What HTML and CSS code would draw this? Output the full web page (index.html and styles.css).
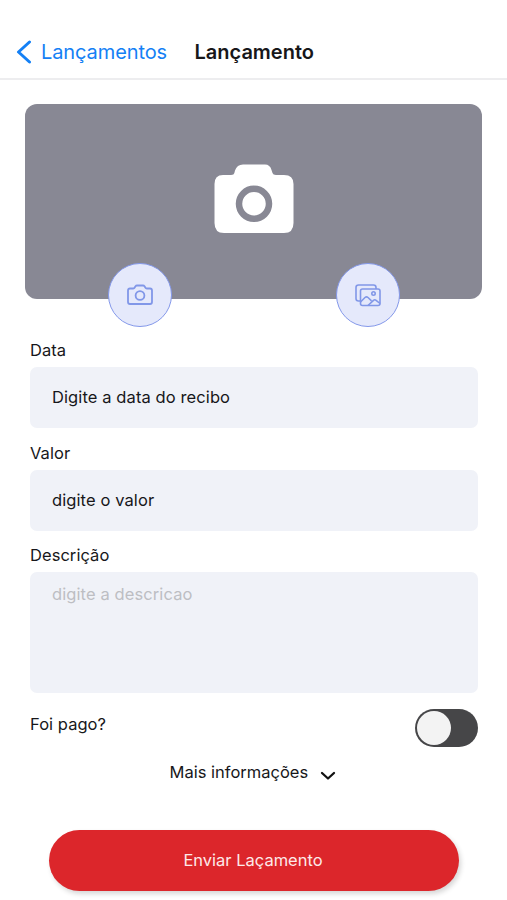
FILE: index.html
```html
<!DOCTYPE html>
<html lang="pt-BR">
<head>
<meta charset="utf-8">
<meta name="viewport" content="width=device-width, initial-scale=1">
<title>Lançamento</title>
<link rel="stylesheet" href="styles.css">
</head>
<body>
<header class="nav">
  <a class="back" href="#">
    <svg class="back-icon" width="16" height="24" viewBox="0 0 16 24" fill="none" stroke="currentColor" stroke-width="3" stroke-linecap="round" stroke-linejoin="round"><path d="M13.500 2 2.500 12l11 10"/></svg>
    <span>Lançamentos</span>
  </a>
  <h1 class="title">Lançamento</h1>
</header>
<main>
  <section class="photo">
    <svg class="photo-icon" width="80" height="70" viewBox="0 0 80 70">
      <path fill="#fff" d="M9 11H17Q20 11 20.500 8.500L21 6.500Q23 .5 29 .5H51Q56 .5 57.500 6L58.500 9Q59 11 62 11H70Q79.500 11 79.500 20V59Q79.500 69 70 69H10Q.5 69 .5 59V20Q.5 11 9 11Z"/>
      <circle cx="40" cy="39.800" r="15" fill="none" stroke="#888894" stroke-width="6.500"/>
    </svg>
    <div class="actions">
      <button class="round" aria-label="Câmera">
        <svg width="26" height="24" viewBox="0 0 26 24" fill="none" stroke="currentColor" stroke-width="1.800" stroke-linejoin="round"><path d="M3 5.500H6.200Q7.200 5.500 7.700 4.500L8.500 3.200Q9 2.500 10 2.500H16Q17 2.500 17.500 3.200L18.300 4.500Q18.800 5.500 19.800 5.500H23Q25 5.500 25 7.500V19Q25 21 23 21H3Q1 21 1 19V7.500Q1 5.500 3 5.500Z"/><circle cx="13" cy="12.500" r="4.400"/></svg>
      </button>
      <button class="round" aria-label="Galeria">
        <svg width="26" height="24" viewBox="0 -1 26 24" fill="none" stroke="currentColor" stroke-width="1.600" stroke-linejoin="round"><path d="M5.500 17H3.500Q1 17 1 14.500V3.500Q1 1 3.500 1H18.500Q21 1 21 3.500V5"/><rect x="5.500" y="5" width="19.500" height="16.500" rx="2"/><circle cx="18.500" cy="9.500" r="1.700"/><path d="m5.500 18 4.500-4.500q1.500-1.300 3 0l3.500 3.300M13 21.500l5.500-5.200q1.300-1.100 2.600 0l3.900 3.200"/></svg>
      </button>
    </div>
  </section>
  <form class="form">
    <label class="label" for="data">Data</label>
    <div class="field" id="data">Digite a data do recibo</div>
    <label class="label" for="valor">Valor</label>
    <div class="field" id="valor">digite o valor</div>
    <label class="label" for="descricao">Descrição</label>
    <div class="field area" id="descricao">digite a descricao</div>
    <div class="paid">
      <span>Foi pago?</span>
      <div class="switch" role="switch" aria-checked="false"><div class="knob"></div></div>
    </div>
    <div class="more">
      <span>Mais informações</span>
      <svg class="chevron" width="16" height="10" viewBox="0 0 16 10" fill="none" stroke="#111" stroke-width="2.300" stroke-linecap="round" stroke-linejoin="round"><path d="m2 2 6 5.500L14 2"/></svg>
    </div>
    <button class="submit" type="button">Enviar Laçamento</button>
  </form>
</main>
</body>
</html>
```
FILE: styles.css
```css
* { box-sizing: border-box; }
body {
  margin: 0;
  height: 900px;
  overflow: hidden;
  background: #fff;
  color: #17171a;
  font-family: Inter, "Liberation Sans", sans-serif;
  font-size: 16.5px;
  line-height: 20px;
}
button { font: inherit; padding: 0; cursor: pointer; }
.nav {
  display: flex;
  align-items: center;
  height: 80px;
  padding: 25px 0 0 16px;
  border-bottom: 2px solid #ededef;
}
.back {
  display: flex;
  align-items: center;
  width: 178.5px;
  color: #1480f5;
  text-decoration: none;
  font-size: 20px;
  letter-spacing: -.1px;
}
.back-icon { margin-right: 9px; }
.title { margin: 0; font-size: 20px; font-weight: 600; line-height: 24px; }
.photo {
  display: flex;
  flex-direction: column;
  align-items: center;
  width: 457px;
  height: 195px;
  margin: 24px 0 0 25.4px;
  padding-top: 60px;
  border-radius: 12px;
  background: #888894;
}
.photo-icon { flex: none; }
.actions {
  display: flex;
  justify-content: space-between;
  width: 292px;
  margin-top: 29px;
}
.round {
  display: grid;
  place-items: center;
  width: 64px;
  height: 64px;
  border: 1.5px solid #8498ea;
  border-radius: 50%;
  background: #e5e9fb;
  color: #8197e8;
}
.form { width: 448px; margin-left: 30px; padding-top: 41px; }
.label { display: block; height: 27px; letter-spacing: .05px; }
.field {
  display: flex;
  align-items: center;
  height: 61px;
  margin-bottom: 14.5px;
  padding: 0 22px 1px;
  border-radius: 7px;
  background: #f0f2f8;
  letter-spacing: .1px;
}
.area {
  align-items: flex-start;
  height: 121px;
  margin-bottom: 15px;
  padding-top: 12px;
  color: #bdbec3;
}
.paid { display: flex; justify-content: space-between; height: 39px; padding-top: 6px; letter-spacing: .05px; }
.switch {
  width: 63px;
  height: 38px;
  margin-top: -5.5px;
  padding: 2px;
  border-radius: 19px;
  background: #464648;
}
.knob { width: 34px; height: 34px; border-radius: 50%; background: #f3f3f3; }
.more { display: flex; margin: 14.5px 0 0 139.5px; height: 20px; }
.chevron { margin: 9.5px 0 0 12px; }
.submit {
  display: block;
  width: 410px;
  height: 61px;
  margin: 48.5px 0 0 19px;
  padding: 0 2px 1px 0;
  border: 0;
  border-radius: 31px;
  background: #dc262b;
  box-shadow: 2px 3px 5px rgba(0, 0, 0, .16);
  color: #fde9e9;
}
```
